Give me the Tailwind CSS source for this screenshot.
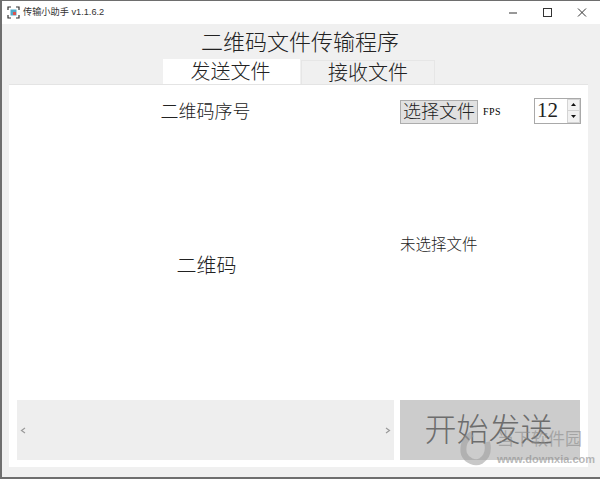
<!DOCTYPE html>
<html lang="zh-CN">

<head>
  <meta charset="UTF-8">
  <meta name="viewport" content="width=device-width, initial-scale=1.0">
  <title>传输小助手</title>
  <script src="https://cdn.jsdelivr.net/npm/@tailwindcss/browser@4"></script>
</head>

<body class="bg-[#6e6e6e] overflow-hidden">
  <div class="relative w-[600px] h-[479px] pt-px pl-0.5 pb-0.5 font-['Liberation_Sans','Noto_Sans_CJK_SC',sans-serif] text-[#222]">
    <div class="h-full flex flex-col bg-[#f0f0f0]">

      <!-- title bar -->
      <div class="h-[23px] shrink-0 bg-white flex items-center pl-[5px]">
        <svg class="w-[13px] h-[13px] mr-[3px]" viewBox="0 0 13 13" fill="none">
          <path d="M1 4V1h3M9 1h3v3M12 9v3H9M4 12H1V9" stroke="#333" stroke-width="1.2" />
          <rect x="3.5" y="3.5" width="6" height="6" fill="#4fa9c9" />
          <rect x="6" y="6" width="3" height="3" fill="#d9534f" />
        </svg>
        <span class="text-[9.2px] leading-none text-[#333]">传输小助手 v1.1.6.2</span>
        <div class="ml-auto flex items-center h-full">
          <svg class="w-[34px] h-[23px]" viewBox="0 0 34 23"><path d="M13 12h8" stroke="#333" /></svg>
          <svg class="w-[34px] h-[23px]" viewBox="0 0 34 23"><rect x="13.5" y="7.5" width="8" height="8" fill="none" stroke="#333" /></svg>
          <svg class="w-[36px] h-[23px]" viewBox="0 0 36 23"><path d="M14 7.5l8 8M22 7.5l-8 8" stroke="#333" /></svg>
        </div>
      </div>

      <!-- heading -->
      <div class="h-[35px] shrink-0 flex items-center justify-center pt-[3px] pr-[2px] text-[22px] leading-none font-light">二维码文件传输程序</div>

      <!-- tabs -->
      <div class="h-[25px] shrink-0 flex items-end pl-[161px] gap-px">
        <div class="w-[137px] h-[25px] bg-white flex items-center justify-center pr-[2px] text-[20px] leading-none font-light">发送文件</div>
        <div class="w-[134px] h-[24px] bg-[#f0f0f0] border border-b-0 border-[#e6e6e6] flex items-center justify-center text-[20px] leading-none font-light">接收文件</div>
      </div>

      <!-- tab pane -->
      <div class="ml-[7px] mr-[12px] mb-[10px] flex-1 bg-white border-t border-[#e4e4e4] pl-2 pr-[7px] pt-[13px] pb-[7px] flex flex-col">
        <div class="flex-1 flex gap-1.5 min-h-0">
          <div class="w-[377px] flex flex-col items-center">
            <div class="h-[27px] flex items-center text-[18px] leading-none font-light">二维码序号</div>
            <div class="flex-1 flex items-center justify-center pt-[6px] pl-[2px] text-[20px] leading-none font-light">二维码</div>
          </div>
          <div class="flex-1 flex flex-col">
            <div class="h-[27px] flex items-center">
              <div class="w-[78px] h-[24px] bg-[#e1e1e1] border border-[#adadad] flex items-center justify-center text-[18px] leading-none font-light">选择文件</div>
              <span class="ml-[5px] text-[10px] leading-none tracking-[0.5px] text-black font-['Liberation_Serif',serif]">FPS</span>
              <div class="ml-auto w-[47px] h-[26px] bg-white border border-[#a9a9a9] flex items-center pl-[2px] -translate-y-px">
                <span class="text-[21px] leading-none font-['Liberation_Serif',serif]">12</span>
                <div class="ml-auto w-[13px] h-full flex flex-col bg-[#d4d4d4] gap-px p-px">
                  <div class="flex-1 bg-[#f2f2f2] flex items-center justify-center">
                    <svg class="w-[5px] h-[3px]" viewBox="0 0 5 3"><path d="M2.5 0L5 3H0z" fill="#111" /></svg>
                  </div>
                  <div class="flex-1 bg-[#f2f2f2] flex items-center justify-center">
                    <svg class="w-[5px] h-[3px]" viewBox="0 0 5 3"><path d="M0 0h5L2.5 3z" fill="#111" /></svg>
                  </div>
                </div>
              </div>
            </div>
            <div class="flex-1 flex items-center pb-[35px] text-[15.5px] leading-none font-light">未选择文件</div>
          </div>
        </div>

        <div class="h-[60px] shrink-0 flex gap-1.5">
          <div class="w-[377px] bg-[#eeeeee] flex items-center justify-between pl-[3px] pr-[3px] text-[#9a9a9a]">
            <svg class="w-[6px] h-[7px]" viewBox="0 0 6 7" fill="none"><path d="M5 1L1.5 3.5 5 6" stroke="currentColor" stroke-width="1.2" /></svg>
            <svg class="w-[6px] h-[7px]" viewBox="0 0 6 7" fill="none"><path d="M1 1l3.5 2.5L1 6" stroke="currentColor" stroke-width="1.2" /></svg>
          </div>
          <div class="w-[180px] bg-[#cccccc] flex items-center justify-center pr-[3px] text-[32px] leading-none font-light text-[#6d6d6d]">开始发送</div>
        </div>
      </div>
    </div>

    <!-- watermark -->
    <div class="absolute left-[459px] top-[430px] flex items-center text-[#8a8a8a]/60">
      <svg class="w-[33px] h-[36px]" viewBox="0 0 33 36" fill="none">
        <path d="M13 4C6 8 3 16 5 24c3 7 11 10 17 7 6-4 8-11 6-19" stroke="#9a9a9a" stroke-opacity=".55" stroke-width="6" />
      </svg>
      <div class="ml-[5px] flex flex-col items-start leading-none">
        <span class="text-[17px] leading-none">当下软件园</span>
        <span class="mt-[6px] text-[11px] leading-none font-semibold">www.downxia.com</span>
      </div>
    </div>
  </div>
</body>

</html>
